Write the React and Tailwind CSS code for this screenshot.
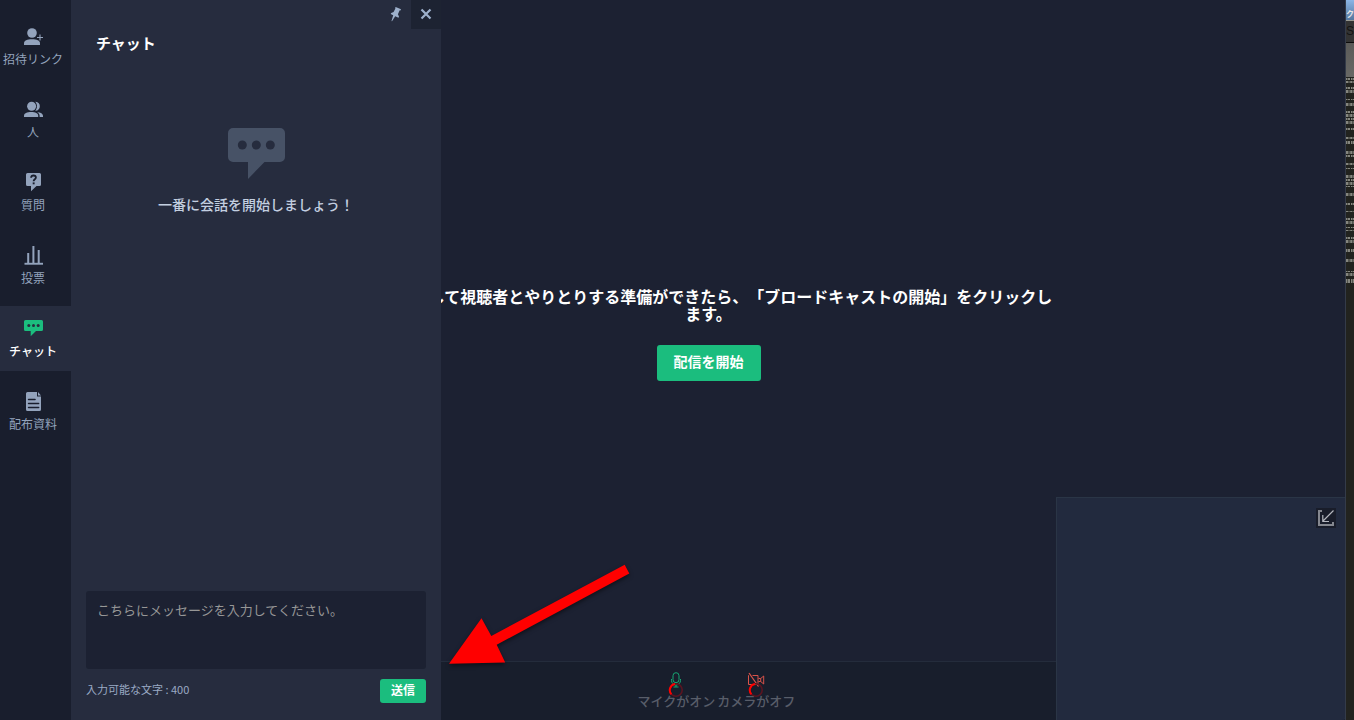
import React, { useState } from "react";

const InviteIcon = () => (
  <svg viewBox="0 0 20 20" className="h-5 w-5" fill="currentColor">
    <circle cx="9" cy="7" r="4.8" />
    <path d="M1 19v-1.6c0-2.9 3.2-4.1 8-4.1s8 1.2 8 4.1V19z" />
    <path d="M17 8.6v6M14 11.5h6" stroke="currentColor" strokeWidth="1.1" />
  </svg>
);

const PeopleIcon = () => (
  <svg viewBox="0 0 20 20" className="h-5 w-5" fill="currentColor">
    <circle cx="8.6" cy="7.2" r="4.5" />
    <path d="M12.2 2.700c6.200-.4 6.200 9.400 0 9 2.400-2.600 2.400-6.400 0-9z" />
    <path d="M1 18v-1.200c0-2.500 3-3.700 7.200-3.700s7 1.200 7 3.700V18z" />
    <path d="M14.200 13.200c3.600.2 5.800 1.400 5.800 3.600V18h-3.400v-1.200c0-1.600-.9-2.800-2.400-3.600z" />
  </svg>
);

const QuestionIcon = () => (
  <svg viewBox="0 0 20 20" className="h-5 w-5">
    <path
      d="M4.5 1h12A1.5 1.5 0 0 1 18 2.5v10a1.5 1.5 0 0 1-1.5 1.5h-3L8 19.3V14H4.5A1.5 1.5 0 0 1 3 12.5v-10A1.5 1.5 0 0 1 4.5 1z"
      fill="currentColor"
    />
    <path d="M8.100 5.800c.1-1.500 1-2.300 2.400-2.300s2.400.9 2.400 2.100c0 1.700-2.300 1.700-2.300 3.700" fill="none" stroke="#191e2d" strokeWidth="1.800" />
    <rect x="9.700" y="10.400" width="1.900" height="1.900" fill="#191e2d" />
  </svg>
);

const PollIcon = () => (
  <svg viewBox="0 0 20 20" className="h-5 w-5" fill="currentColor">
    <rect x="4.200" y="8" width="2" height="10" />
    <rect x="9.400" y="1" width="2" height="17" />
    <rect x="14.700" y="5" width="2" height="13" />
    <rect x="1.500" y="17.800" width="18.500" height="1.900" />
  </svg>
);

const ChatIcon = () => (
  <svg viewBox="0 0 20 20" className="h-5 w-5">
    <path
      d="M2.5 2h16A1.5 1.5 0 0 1 20 3.5v8a1.5 1.5 0 0 1-1.5 1.5H13l-5.300 5.300V13H2.500A1.500 1.500 0 0 1 1 11.500v-8A1.500 1.500 0 0 1 2.500 2z"
      fill="#1bbd7e"
    />
    <g fill="#262c3e">
      <circle cx="5.800" cy="7.600" r="1.500" />
      <circle cx="10.500" cy="7.600" r="1.500" />
      <circle cx="15.200" cy="7.600" r="1.500" />
    </g>
  </svg>
);

const DocumentIcon = () => (
  <svg viewBox="0 0 20 20" className="h-5 w-5">
    <path d="M4.500 1H14v4.500h4v13a1.500 1.500 0 0 1-1.500 1.500h-12A1.500 1.500 0 0 1 3 18.500v-16A1.500 1.500 0 0 1 4.500 1z" fill="currentColor" />
    <path d="M15 1l3 3.500h-3z" fill="currentColor" />
    <path d="M5.600 8.500h6.400M5.600 12.500h10M5.600 16.500h10" stroke="#191e2d" strokeWidth="1.600" strokeLinecap="round" />
  </svg>
);

const PinIcon = () => (
  <svg viewBox="0 0 12 16" className="h-4 w-3" fill="currentColor">
    <path d="M6.300 1.300l4.700 2-.5 1.100-.8-.1-1.800 3.900 1.100 2.300-.5 1.200-3.300-1.500L2 15.300l-.5-.2 1.700-5.900-2.500-1.100.5-1.200 2.400-.8 1.800-3.600-.5-.9z" />
  </svg>
);

const CloseIcon = () => (
  <svg viewBox="0 0 12 12" className="h-3 w-3">
    <path d="M1.500 1.500l9 9M10.500 1.500l-9 9" stroke="currentColor" strokeWidth="2.200" />
  </svg>
);

const MicIcon = () => (
  <svg viewBox="0 0 18 16" className="h-4 w-[18px]" fill="none" stroke="#17a673">
    <rect x="6" y="0.700" width="6" height="10" rx="3" />
    <path d="M4.500 7v1.500a4.500 4.500 0 0 0 9 0V7M9 13v2M6.500 15h5" />
  </svg>
);

const CameraIcon = () => (
  <svg viewBox="0 0 18 16" className="h-4 w-[18px]" fill="none" stroke="#d9534a">
    <path d="M5.500 3.500H11V12M9 12.500H1.500v-9H2M11.500 6.500h2.200l3-2.500v8l-3-2.500h-2.200M13.700 6.500v3" />
    <path d="M2 1l9.500 13.500" strokeWidth="1.300" />
  </svg>
);

const Spinner = () => (
  <svg viewBox="0 0 16 16" className="absolute left-1/2 top-[10px] h-4 w-4 -translate-x-1/2" fill="none">
    <circle cx="8" cy="8" r="6.200" stroke="#5a1521" strokeWidth="1.600" />
    <path d="M7 2a6.200 6.200 0 0 0-3.600 10.300" stroke="#ff0000" strokeWidth="2" />
  </svg>
);

const navItems = [
  { id: "invite", label: "招待リンク", icon: InviteIcon },
  { id: "people", label: "人", icon: PeopleIcon },
  { id: "questions", label: "質問", icon: QuestionIcon },
  { id: "polls", label: "投票", icon: PollIcon },
  { id: "chat", label: "チャット", icon: ChatIcon },
  { id: "handouts", label: "配布資料", icon: DocumentIcon },
];

const Sidebar = ({ active, onSelect }) => (
  <nav className="flex w-[71px] shrink-0 flex-col gap-2 bg-[#191e2d] pt-[14px]">
    {navItems.map(({ id, label, icon: Icon }) => (
      <button
        key={id}
        type="button"
        onClick={() => onSelect(id)}
        className={`flex h-[65px] flex-col items-center gap-1 pr-[5px] pt-3 text-xs leading-[18px] whitespace-nowrap ${
          id === active ? "bg-[#262c3e] font-medium text-white" : "text-[#93a3bc]"
        }`}
      >
        <Icon />
        <span>{label}</span>
      </button>
    ))}
  </nav>
);

const MAX_LENGTH = 400;

const ChatPanel = ({ onClose }) => {
  const [message, setMessage] = useState("");

  return (
    <section className="absolute inset-y-0 left-0 flex w-[370px] flex-col bg-[#262c3e]">
      <div className="flex h-[29px] shrink-0 justify-end text-[#9db0cb]">
        <button type="button" aria-label="ピン留め" className="flex w-[30px] items-center justify-center pb-[2px]">
          <PinIcon />
        </button>
        <button
          type="button"
          aria-label="閉じる"
          onClick={onClose}
          className="flex w-[30px] items-center justify-center bg-[#1d2332] pb-[2px]"
        >
          <CloseIcon />
        </button>
      </div>

      <h2 className="px-[25px] pt-[3px] text-[15px] font-bold leading-[22px] text-white">チャット</h2>

      <div className="flex flex-1 flex-col items-center pt-[74px]">
        <svg viewBox="0 0 57 51" className="h-[51px] w-[57px]">
          <path
            d="M5 0h47a5 5 0 0 1 5 5v24a5 5 0 0 1-5 5H36.500L20 51V34H5a5 5 0 0 1-5-5V5a5 5 0 0 1 5-5z"
            fill="#475266"
          />
          <g fill="#262c3e">
            <circle cx="14.300" cy="17" r="4.500" />
            <circle cx="28.300" cy="17" r="4.500" />
            <circle cx="42.300" cy="17" r="4.500" />
          </g>
        </svg>
        <p className="mt-[15px] text-sm font-medium text-[#c3cfe0]">一番に会話を開始しましょう！</p>
      </div>

      <form className="px-[15px] pb-[17px]" onSubmit={(e) => e.preventDefault()}>
        <textarea
          aria-label="メッセージ"
          maxLength={MAX_LENGTH}
          value={message}
          onChange={(e) => setMessage(e.target.value)}
          placeholder="こちらにメッセージを入力してください。"
          className="block h-[78px] w-full resize-none rounded-[3px] bg-[#1c2132] px-[11px] py-[9px] text-[13px] leading-5 text-white outline-none placeholder:text-[#979797]"
        />
        <div className="mt-[10px] flex items-start justify-between">
          <span className="pt-[2px] text-[11px] leading-4 text-[#9aaac4]">
            入力可能な文字 : {MAX_LENGTH - message.length}
          </span>
          <button type="submit" className="h-6 rounded-[3px] bg-[#1bbd7e] px-[11px] pb-[2px] text-xs font-bold text-white">
            送信
          </button>
        </div>
      </form>
    </section>
  );
};

const DeviceButton = ({ icon: Icon, label }) => (
  <button
    type="button"
    className="relative flex flex-col items-center gap-1 text-[13px] font-medium leading-[18px] whitespace-nowrap text-[#585d69]"
  >
    <Icon />
    <Spinner />
    <span className="relative">{label}</span>
  </button>
);

const SelfView = () => (
  <div className="absolute bottom-0 right-0 flex h-[223px] w-[290px] items-start justify-end rounded-br border border-b-0 border-[#2a3546] bg-[#222a3e] p-[10px] pr-[9px]">
    <button type="button" aria-label="最小化" className="h-5 w-5 bg-[#191d2a]">
      <svg viewBox="0 0 20 20" className="h-5 w-5" fill="none">
        <path d="M6 3H3v14h14v-3" stroke="#858890" strokeWidth="2" />
        <path d="M17.500 2.500L7 13M6.800 7v6.500H13" stroke="#b4b7be" strokeWidth="1.200" />
      </svg>
    </button>
  </div>
);

const Arrow = () => (
  <svg
    viewBox="0 0 190 110"
    className="pointer-events-none absolute bottom-[50px] left-[375px] h-[110px] w-[190px] drop-shadow-[0_2px_2px_rgba(0,0,0,0.5)]"
  >
    <path d="M3 103.700L35.500 58.300 45.300 76 178.700 4.700l4.600 8.700L50.700 84.700l8.500 17.700z" fill="#ff0000" />
  </svg>
);

// [top, thickness] of each line of terminal output in the window behind
const terminalLines = [
  [78, 2], [81, 2], [87, 2], [90, 3], [99, 1], [103, 3], [111, 2],
  [114, 3], [118, 2], [121, 3], [128, 2], [137, 2], [141, 3], [151, 3],
  [155, 2], [163, 2], [168, 1], [175, 3], [179, 2], [182, 3], [186, 1],
  [193, 3], [203, 2], [211, 1], [218, 2], [221, 3], [227, 1], [230, 1],
  [237, 2], [240, 3], [249, 3], [259, 3], [271, 1], [273, 3], [279, 4],
];

const BackgroundWindow = () => (
  <aside className="w-2 shrink-0 overflow-hidden bg-[#22231f]" aria-hidden="true">
    <div className="h-5 bg-linear-to-b from-[#8bb5e6] to-[#54779f] pt-2 text-[8px] font-bold leading-3 text-[#e5e5e5]">ク</div>
    <div className="h-[23px] border-y border-t-[#96978f] border-b-[#0c0c0c] bg-[#333333] font-['Liberation_Sans'] text-xs leading-5 text-[#141414]">S</div>
    <div className="h-[34px] bg-linear-to-b from-[#5b5b59] to-[#686865]" />
    <svg viewBox="0 77 8 210" className="h-[210px] w-2">
      {terminalLines.map(([top, size], i) => (
        <line
          key={top}
          x1="0"
          x2="8"
          y1={top + size / 2}
          y2={top + size / 2}
          stroke="#85867f"
          strokeWidth={size}
          strokeDasharray={i % 2 ? "2 0.5 1 0.7" : "1 0.5 2.5 1"}
        />
      ))}
    </svg>
  </aside>
);

const App = () => {
  const [activeTab, setActiveTab] = useState("chat");

  return (
    <div className="flex h-screen overflow-hidden bg-[#1c2132] font-['Noto_Sans_CJK_JP',sans-serif]">
      <Sidebar active={activeTab} onSelect={setActiveTab} />

      <main className="relative flex min-w-0 flex-1 flex-col">
        <div className="flex flex-1 flex-col items-center justify-center pt-2">
          <p className="max-w-[700px] text-center text-base font-bold leading-[17px] text-white [text-spacing-trim:space-all]">
            放送を通して視聴者とやりとりする準備ができたら、「ブロードキャストの開始」をクリックします。
          </p>
          <button
            type="button"
            className="mt-[23px] h-9 rounded-[3px] bg-[#1bbd7e] px-[17px] pb-1 text-sm font-bold text-white"
          >
            配信を開始
          </button>
        </div>

        <footer className="flex h-[59px] shrink-0 items-start justify-center gap-[2px] border-t border-[#242c3c] bg-[#181e2c] pl-4 pt-[10px]">
          <DeviceButton icon={MicIcon} label="マイクがオン" />
          <DeviceButton icon={CameraIcon} label="カメラがオフ" />
        </footer>

        {activeTab === "chat" && <ChatPanel onClose={() => setActiveTab(null)} />}
        <SelfView />
        <Arrow />
        <div className="pointer-events-none absolute inset-y-0 right-0 w-px bg-[#343b49]" />
      </main>

      <BackgroundWindow />
    </div>
  );
};

export default App;
